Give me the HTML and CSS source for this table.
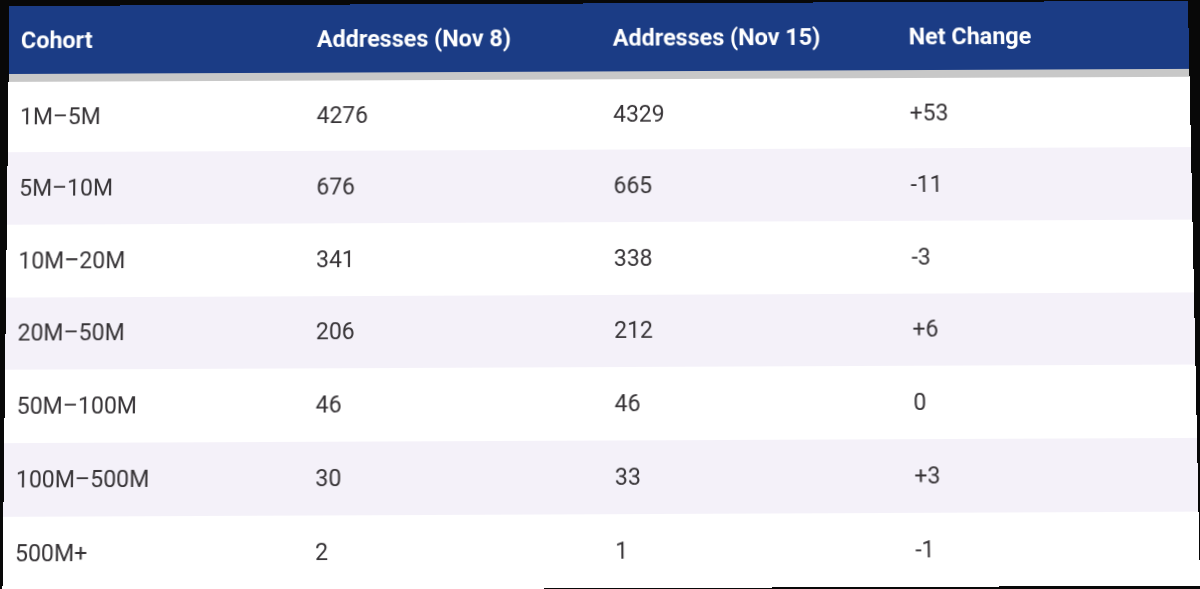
FILE: index.html
```html
<!DOCTYPE html>
<html>
<head>
<meta charset="utf-8">
<link rel="stylesheet" href="styles.css">
</head>
<body>
<div class="frame">
  <div class="sheet" role="table">
    <div class="row head" role="row">
      <div class="cell" role="columnheader">Cohort</div>
      <div class="cell" role="columnheader">Addresses (Nov 8)</div>
      <div class="cell" role="columnheader">Addresses (Nov 15)</div>
      <div class="cell" role="columnheader">Net Change</div>
    </div>
    <div class="strip"></div>
    <div class="row first" role="row"><div class="cell">1M–5M</div><div class="cell">4276</div><div class="cell">4329</div><div class="cell">+53</div></div>
    <div class="row alt" role="row"><div class="cell">5M–10M</div><div class="cell">676</div><div class="cell">665</div><div class="cell">-11</div></div>
    <div class="row" role="row"><div class="cell">10M–20M</div><div class="cell">341</div><div class="cell">338</div><div class="cell">-3</div></div>
    <div class="row alt" role="row"><div class="cell">20M–50M</div><div class="cell">206</div><div class="cell">212</div><div class="cell">+6</div></div>
    <div class="row" role="row"><div class="cell">50M–100M</div><div class="cell">46</div><div class="cell">46</div><div class="cell">0</div></div>
    <div class="row alt" role="row"><div class="cell">100M–500M</div><div class="cell">30</div><div class="cell">33</div><div class="cell">+3</div></div>
    <div class="row" role="row"><div class="cell">500M+</div><div class="cell">2</div><div class="cell">1</div><div class="cell">-1</div></div>
  </div>
</div>
</body>
</html>
```

FILE: styles.css
```css
html, body {
  margin: 0;
  padding: 0;
  background: #080808;
  height: 100%;
  overflow: hidden;
}

.frame {
  padding: 1px 0 0 6px;
}

.sheet {
  width: 1188px;
  background: #ffffff;
  font-family: Roboto, "Liberation Sans", sans-serif;
  font-size: 23px;
  color: #373437;
  transform: perspective(1000px) rotateX(1.57deg) rotate(-0.25deg);
  transform-origin: 50% 50%;
}

.row {
  display: grid;
  grid-template-columns: 298px 298px 298px 294px;
  align-items: center;
  height: 72.8px;
}

.row.first {
  height: 71px;
}

.row.alt {
  background: #f4f1f9;
}

.cell {
  padding-left: 12px;
  white-space: nowrap;
}

.row.head {
  height: 69px;
  background: #1b3c85;
  color: #ffffff;
  font-weight: 700;
  font-size: 23.5px;
}

.strip {
  height: 8px;
  background: #c8c8c8;
}
```
